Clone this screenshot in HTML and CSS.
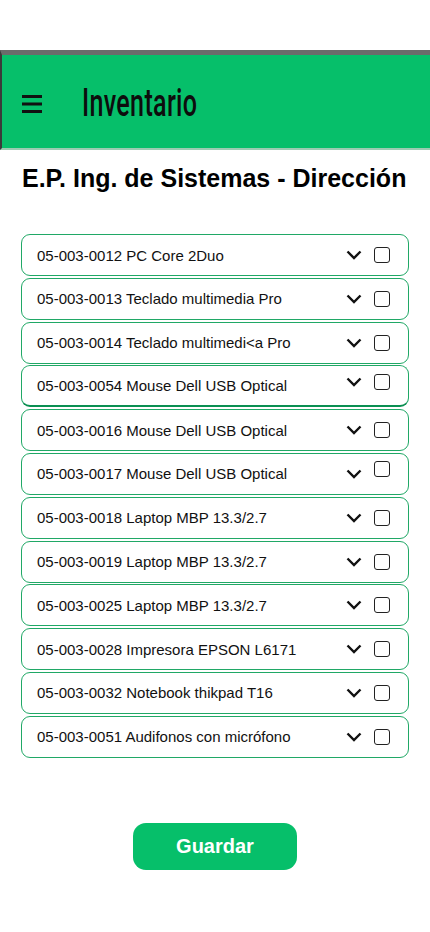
FILE: index.html
```html
<!DOCTYPE html>
<html lang="es">
<head>
<meta charset="utf-8">
<title>Inventario</title>
<link rel="stylesheet" href="styles.css">
</head>
<body>
<header class="appbar">
  <svg class="menu" width="20" height="20" viewBox="0 0 20 20"><rect x="0" y="1" width="20" height="3" fill="#111"/><rect x="0" y="8.5" width="20" height="3" fill="#111"/><rect x="0" y="16" width="20" height="3" fill="#111"/></svg>
  <span class="appbar-title">Inventario</span>
</header>
<h1 class="page-title">E.P. Ing. de Sistemas - Dirección</h1>
<ul class="list">
  <li class="row"><span class="label">05-003-0012 PC Core 2Duo</span><span class="icons"><svg class="chev" width="16" height="10" viewBox="0 0 16 10"><path d="M1.5 1.5 L8 8 L14.5 1.5" fill="none" stroke="#111" stroke-width="2.4"/></svg><span class="box"></span></span></li>
  <li class="row"><span class="label">05-003-0013 Teclado multimedia Pro</span><span class="icons"><svg class="chev" width="16" height="10" viewBox="0 0 16 10"><path d="M1.5 1.5 L8 8 L14.5 1.5" fill="none" stroke="#111" stroke-width="2.4"/></svg><span class="box"></span></span></li>
  <li class="row"><span class="label">05-003-0014 Teclado multimedi&lt;a Pro</span><span class="icons"><svg class="chev" width="16" height="10" viewBox="0 0 16 10"><path d="M1.5 1.5 L8 8 L14.5 1.5" fill="none" stroke="#111" stroke-width="2.4"/></svg><span class="box"></span></span></li>
  <li class="row row-dark"><span class="label">05-003-0054 Mouse Dell USB Optical</span><span class="icons icons-up"><svg class="chev" width="16" height="10" viewBox="0 0 16 10"><path d="M1.5 1.5 L8 8 L14.5 1.5" fill="none" stroke="#111" stroke-width="2.4"/></svg><span class="box"></span></span></li>
  <li class="row"><span class="label">05-003-0016 Mouse Dell USB Optical</span><span class="icons"><svg class="chev" width="16" height="10" viewBox="0 0 16 10"><path d="M1.5 1.5 L8 8 L14.5 1.5" fill="none" stroke="#111" stroke-width="2.4"/></svg><span class="box"></span></span></li>
  <li class="row"><span class="label">05-003-0017 Mouse Dell USB Optical</span><span class="icons"><svg class="chev" width="16" height="10" viewBox="0 0 16 10"><path d="M1.5 1.5 L8 8 L14.5 1.5" fill="none" stroke="#111" stroke-width="2.4"/></svg><span class="box box-up"></span></span></li>
  <li class="row"><span class="label">05-003-0018 Laptop MBP 13.3/2.7</span><span class="icons"><svg class="chev" width="16" height="10" viewBox="0 0 16 10"><path d="M1.5 1.5 L8 8 L14.5 1.5" fill="none" stroke="#111" stroke-width="2.4"/></svg><span class="box"></span></span></li>
  <li class="row"><span class="label">05-003-0019 Laptop MBP 13.3/2.7</span><span class="icons"><svg class="chev" width="16" height="10" viewBox="0 0 16 10"><path d="M1.5 1.5 L8 8 L14.5 1.5" fill="none" stroke="#111" stroke-width="2.4"/></svg><span class="box"></span></span></li>
  <li class="row"><span class="label">05-003-0025 Laptop MBP 13.3/2.7</span><span class="icons"><svg class="chev" width="16" height="10" viewBox="0 0 16 10"><path d="M1.5 1.5 L8 8 L14.5 1.5" fill="none" stroke="#111" stroke-width="2.4"/></svg><span class="box"></span></span></li>
  <li class="row"><span class="label">05-003-0028 Impresora EPSON L6171</span><span class="icons"><svg class="chev" width="16" height="10" viewBox="0 0 16 10"><path d="M1.5 1.5 L8 8 L14.5 1.5" fill="none" stroke="#111" stroke-width="2.4"/></svg><span class="box"></span></span></li>
  <li class="row"><span class="label">05-003-0032 Notebook thikpad T16</span><span class="icons"><svg class="chev" width="16" height="10" viewBox="0 0 16 10"><path d="M1.5 1.5 L8 8 L14.5 1.5" fill="none" stroke="#111" stroke-width="2.4"/></svg><span class="box"></span></span></li>
  <li class="row"><span class="label">05-003-0051 Audifonos con micrófono</span><span class="icons"><svg class="chev" width="16" height="10" viewBox="0 0 16 10"><path d="M1.5 1.5 L8 8 L14.5 1.5" fill="none" stroke="#111" stroke-width="2.4"/></svg><span class="box"></span></span></li>
</ul>
<div class="actions"><button class="save">Guardar</button></div>
</body>
</html>
```
FILE: styles.css
```css
* { box-sizing: border-box; }
html, body { margin: 0; padding: 0; background: #fff; }
body { font-family: "Liberation Sans", Arial, sans-serif; color: #111; width: 430px; }

.appbar {
  margin-top: 50px;
  height: 100px;
  background: #06bf6a;
  border-top: 5px solid #6b6b6b;
  border-left: 2px solid #3a3a3a;
  border-bottom: 2px solid #9ccbb2;
  display: flex;
  align-items: center;
  padding-left: 20px;
}
.menu { display: block; margin-top: 4px; }
.appbar-title {
  font-family: Roboto, "Liberation Sans", sans-serif;
  font-size: 38px;
  font-weight: 500;
  color: #0d0d0d;
  margin-left: 40px;
  transform: scaleX(0.66);
  transform-origin: left center;
  margin-top: 2px;
  letter-spacing: 0.5px;
}

.page-title {
  margin: 0;
  padding: 13px 0 0 22px;
  height: 84px;
  font-size: 25px;
  font-weight: bold;
  line-height: 30px;
  color: #000;
}

.list {
  list-style: none;
  margin: 0 21px;
  padding: 0;
  display: flex;
  flex-direction: column;
  gap: 1.8px;
}
.row {
  height: 42px;
  border: 1px solid #20a866;
  border-radius: 9px;
  display: flex;
  align-items: center;
  justify-content: space-between;
  padding: 0 18px 0 15px;
  font-size: 15px;
  color: #111;
}
.row-dark { border-bottom: 2px solid #0b8f52; }
.icons { display: flex; align-items: center; gap: 12px; }
.icons-up { margin-top: -8px; }
.chev { display: block; }
.box {
  display: block;
  width: 16px;
  height: 16px;
  border: 1.6px solid #222;
  border-radius: 3px;
}
.box-up { margin-top: -9px; }

.actions { display: flex; justify-content: center; padding-top: 65px; }
.save {
  width: 164px;
  height: 47px;
  border: none;
  border-radius: 13px;
  background: #06bf6a;
  color: #fff;
  font-family: "Liberation Sans", Arial, sans-serif;
  font-weight: bold;
  font-size: 20px;
}
```
